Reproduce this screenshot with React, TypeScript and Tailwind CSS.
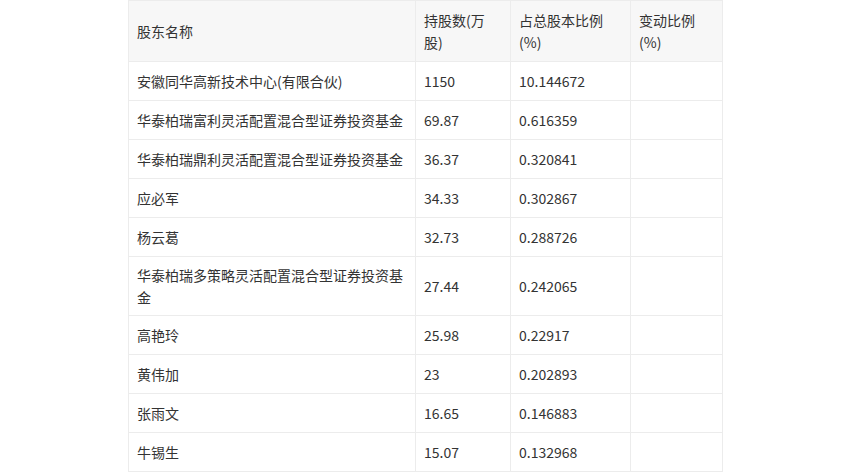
const rows: [string, string, string][] = [
  ["安徽同华高新技术中心(有限合伙)", "1150", "10.144672"],
  ["华泰柏瑞富利灵活配置混合型证券投资基金", "69.87", "0.616359"],
  ["华泰柏瑞鼎利灵活配置混合型证券投资基金", "36.37", "0.320841"],
  ["应必军", "34.33", "0.302867"],
  ["杨云葛", "32.73", "0.288726"],
  ["华泰柏瑞多策略灵活配置混合型证券投资基金", "27.44", "0.242065"],
  ["高艳玲", "25.98", "0.22917"],
  ["黄伟加", "23", "0.202893"],
  ["张雨文", "16.65", "0.146883"],
  ["牛锡生", "15.07", "0.132968"],
];

export default function App() {
  const td = "border border-[#ececec] px-[8px] py-[7px] align-middle leading-[22px]";
  return (
    <div className="w-[850px] h-[474px] overflow-hidden bg-white" style={{ fontFamily: '"Noto Sans CJK SC", "Noto Sans", sans-serif' }}>
      <table className="ml-[128px] w-[594px] border-collapse text-[14px] text-[#333] table-fixed">
        <colgroup>
          <col className="w-[287px]" />
          <col className="w-[95px]" />
          <col className="w-[120px]" />
          <col className="w-[92px]" />
        </colgroup>
        <thead>
          <tr className="bg-[#f7f7f7] h-[61px]">
            <td className={td}>股东名称</td>
            <td className={td}>持股数(万股)</td>
            <td className={td}>占总股本比例(%)</td>
            <td className={td}>变动比例(%)</td>
          </tr>
        </thead>
        <tbody>
          {rows.map((r) => (
            <tr key={r[0]} className="h-[39px]">
              <td className={td}>{r[0]}</td>
              <td className={td}>{r[1]}</td>
              <td className={td}>{r[2]}</td>
              <td className={td}></td>
            </tr>
          ))}
        </tbody>
      </table>
    </div>
  );
}
